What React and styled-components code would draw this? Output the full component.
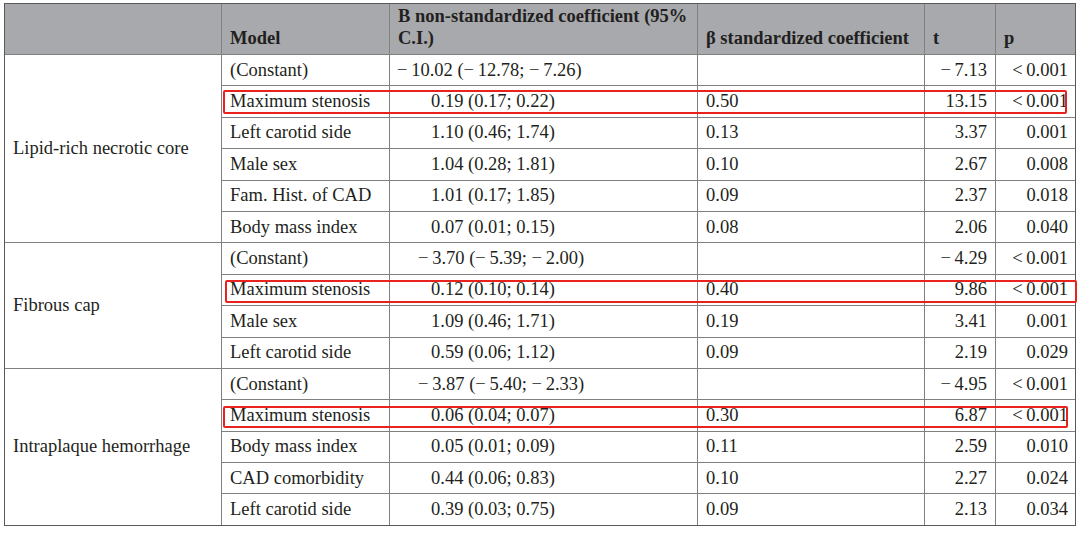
import React from 'react';
import styled, { createGlobalStyle } from 'styled-components';

const GlobalStyle = createGlobalStyle`
  body {
    margin: 0;
    background: #fff;
  }
`;

const M = '\u2212\u2009';
const LT = '<\u20090.001';

const sections = [
  {
    label: 'Lipid-rich necrotic core',
    rows: [
      { model: '(Constant)', b: `${M}10.02 (${M}12.78; ${M}7.26)`, indent: 7, beta: '', t: `${M}7.13`, p: LT },
      { model: 'Maximum stenosis', b: '0.19 (0.17; 0.22)', beta: '0.50', t: '13.15', p: LT,
        mark: { top: 4, bottom: 3, left: 1, right: 8 } },
      { model: 'Left carotid side', b: '1.10 (0.46; 1.74)', beta: '0.13', t: '3.37', p: '0.001' },
      { model: 'Male sex', b: '1.04 (0.28; 1.81)', beta: '0.10', t: '2.67', p: '0.008' },
      { model: 'Fam. Hist. of CAD', b: '1.01 (0.17; 1.85)', beta: '0.09', t: '2.37', p: '0.018' },
      { model: 'Body mass index', b: '0.07 (0.01; 0.15)', beta: '0.08', t: '2.06', p: '0.040' },
    ],
  },
  {
    label: 'Fibrous cap',
    rows: [
      { model: '(Constant)', b: `${M}3.70 (${M}5.39; ${M}2.00)`, indent: 28, beta: '', t: `${M}4.29`, p: LT },
      { model: 'Maximum stenosis', b: '0.12 (0.10; 0.14)', beta: '0.40', t: '9.86', p: LT,
        mark: { top: 5, bottom: 2, left: 3, right: -2 } },
      { model: 'Male sex', b: '1.09 (0.46; 1.71)', beta: '0.19', t: '3.41', p: '0.001' },
      { model: 'Left carotid side', b: '0.59 (0.06; 1.12)', beta: '0.09', t: '2.19', p: '0.029' },
    ],
  },
  {
    label: 'Intraplaque hemorrhage',
    rows: [
      { model: '(Constant)', b: `${M}3.87 (${M}5.40; ${M}2.33)`, indent: 28, beta: '', t: `${M}4.95`, p: LT },
      { model: 'Maximum stenosis', b: '0.06 (0.04; 0.07)', beta: '0.30', t: '6.87', p: LT,
        mark: { top: 6, bottom: 3, left: 1, right: 7 } },
      { model: 'Body mass index', b: '0.05 (0.01; 0.09)', beta: '0.11', t: '2.59', p: '0.010' },
      { model: 'CAD comorbidity', b: '0.44 (0.06; 0.83)', beta: '0.10', t: '2.27', p: '0.024' },
      { model: 'Left carotid side', b: '0.39 (0.03; 0.75)', beta: '0.09', t: '2.13', p: '0.034' },
    ],
  },
];

export default function App() {
  return (
    <Page>
      <GlobalStyle />
      <Table>
        <Header>
          <HeadCell />
          <HeadCell>Model</HeadCell>
          <HeadCell>
            B non-standardized coefficient (95%
            <br />
            C.I.)
          </HeadCell>
          <HeadCell>β standardized coefficient</HeadCell>
          <HeadCell>t</HeadCell>
          <HeadCell>p</HeadCell>
        </Header>

        {sections.map((section) => (
          <Section key={section.label}>
            <Label>{section.label}</Label>
            <Rows>
              {section.rows.map((row) => (
                <Row key={row.model}>
                  <Cell>{row.model}</Cell>
                  <Cell $indent={row.indent ?? 41}>{row.b}</Cell>
                  <Cell>{row.beta}</Cell>
                  <Cell $right>{row.t}</Cell>
                  <Cell $right $padRight={7}>{row.p}</Cell>
                  {row.mark && (
                    <Highlight
                      style={{
                        top: row.mark.top,
                        bottom: row.mark.bottom,
                        left: row.mark.left,
                        right: row.mark.right,
                      }}
                    />
                  )}
                </Row>
              ))}
            </Rows>
          </Section>
        ))}
      </Table>
    </Page>
  );
}

const COLS = '167px 307px 226px 70px 79px';

const Page = styled.div`
  padding: 3px 4px 0;
`;

const Table = styled.div`
  box-sizing: border-box;
  width: 1072px;
  display: flex;
  flex-direction: column;
  gap: 1px;
  border: 1px solid #5a5a5a;
  background: #808080;
  font-family: "Liberation Serif", "Times New Roman", serif;
  font-size: 18.5px;
  color: #231f20;
`;

const Header = styled.div`
  display: grid;
  grid-template-columns: 216px ${COLS};
  gap: 1px;
  height: 50px;
`;

const HeadCell = styled.div`
  display: flex;
  align-items: flex-end;
  padding: 0 8px 5px;
  background: #a7a9ac;
  font-weight: bold;
  line-height: 22px;
  white-space: nowrap;
`;

const Section = styled.div`
  display: grid;
  grid-template-columns: 216px 1fr;
  gap: 1px;
`;

const Label = styled.div`
  display: flex;
  align-items: center;
  padding-left: 8px;
  background: #fff;
`;

const Rows = styled.div`
  display: flex;
  flex-direction: column;
  gap: 1px;
`;

const Row = styled.div`
  position: relative;
  display: grid;
  grid-template-columns: ${COLS};
  gap: 1px;
  height: 30.4px;
`;

const Cell = styled.div`
  display: flex;
  align-items: center;
  justify-content: ${(p) => (p.$right ? 'flex-end' : 'flex-start')};
  padding: 0 ${(p) => p.$padRight ?? 8}px 0 ${(p) => p.$indent ?? 8}px;
  background: #fff;
  white-space: nowrap;
`;

const Highlight = styled.div`
  position: absolute;
  border: 2px solid #e8231d;
  border-radius: 2px;
  pointer-events: none;
`;
